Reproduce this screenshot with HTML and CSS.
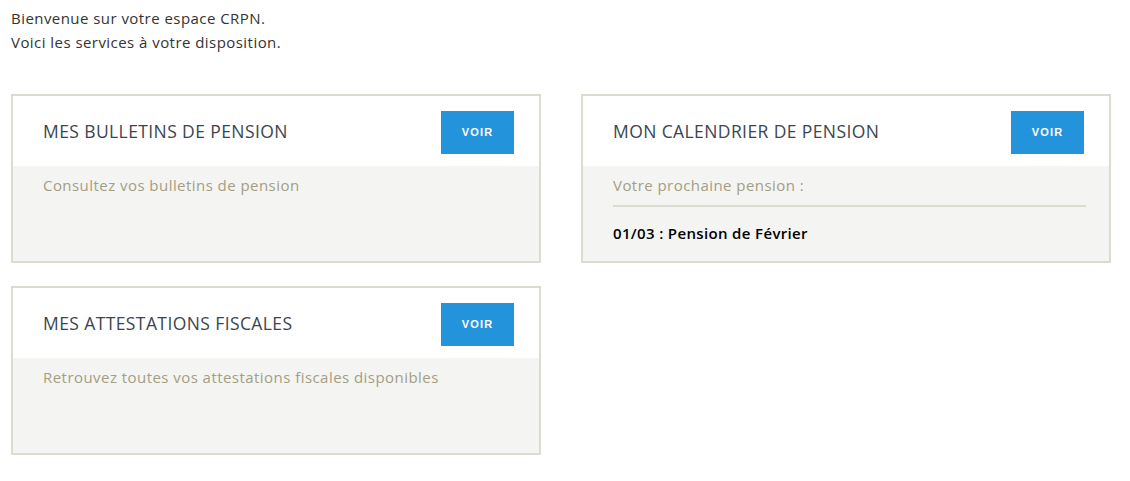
FILE: index.html
```html
<!DOCTYPE html>
<html lang="fr">
<head>
<meta charset="UTF-8" />
<meta name="viewport" content="width=device-width, initial-scale=1" />
<title>Espace CRPN</title>
<link rel="stylesheet" href="styles.css">
</head>
<body>

<p class="intro">
  Bienvenue sur votre espace CRPN.<br>
  Voici les services à votre disposition.
</p>

<div class="services">
  <div class="service-card">
    <div class="card-head">
      <h2>Mes bulletins de pension</h2>
      <button type="button" class="btn-voir">Voir</button>
    </div>
    <div class="card-body">
      <p class="card-text">Consultez vos bulletins de pension</p>
    </div>
  </div>

  <div class="service-card">
    <div class="card-head">
      <h2>Mon calendrier de pension</h2>
      <button type="button" class="btn-voir">Voir</button>
    </div>
    <div class="card-body">
      <p class="card-text">Votre prochaine pension :</p>
      <hr class="card-sep">
      <p class="next-date">01/03 : Pension de Février</p>
    </div>
  </div>

  <div class="service-card">
    <div class="card-head">
      <h2>Mes attestations fiscales</h2>
      <button type="button" class="btn-voir">Voir</button>
    </div>
    <div class="card-body">
      <p class="card-text">Retrouvez toutes vos attestations fiscales disponibles</p>
    </div>
  </div>
</div>

</body>
</html>
```

FILE: styles.css
```css
/* Base */
* {
  box-sizing: border-box;
}
body {
  margin: 0;
  padding: 6px 11px;
  font-family: 'Open Sans', Lato, sans-serif;
  color: #333;
  background: #fff;
}

.intro {
  margin: 0;
  font-size: 15px;
  line-height: 24px;
  letter-spacing: 0.45px;
}

/* Cards grid */
.services {
  display: grid;
  grid-template-columns: 530px 530px;
  column-gap: 40px;
  row-gap: 23px;
  margin-top: 40px;
}

.service-card {
  border: 2px solid #dcdbcf;
  background: #f4f4f2;
  height: 169px;
  display: flex;
  flex-direction: column;
}

.card-head {
  background: #fff;
  height: 70px;
  display: flex;
  align-items: center;
  justify-content: space-between;
  padding: 0 25px 0 30px;
}

.card-head h2 {
  margin: 0;
  font-size: 17.5px;
  font-weight: 400;
  text-transform: uppercase;
  letter-spacing: 0.4px;
  color: #3b4550;
}

.btn-voir {
  width: 73px;
  height: 43px;
  margin-top: 2px;
  padding: 0;
  border: none;
  background: #2394dc;
  color: #fff;
  font-family: 'Liberation Sans', Arial, sans-serif;
  font-size: 11px;
  font-weight: 700;
  letter-spacing: 1.2px;
  text-transform: uppercase;
  cursor: pointer;
}

.card-body {
  flex: 1;
  padding: 8px 23px 0 30px;
}

.card-text {
  margin: 0;
  font-size: 15px;
  line-height: 22px;
  letter-spacing: 0.45px;
  color: #a39e84;
}

.card-sep {
  border: none;
  border-top: 2px solid #dcdbcf;
  margin: 9px 0 0;
}

.next-date {
  margin: 16px 0 0;
  font-size: 15px;
  font-weight: 600;
  letter-spacing: 0.35px;
  color: #000;
}
```
